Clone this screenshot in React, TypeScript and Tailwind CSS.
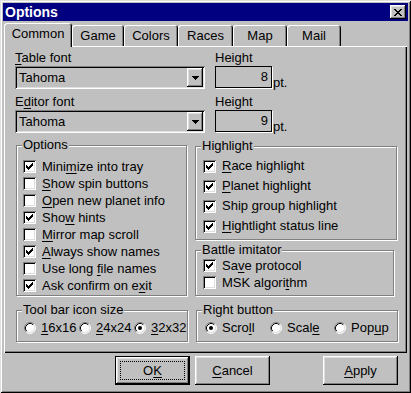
import React from 'react'

const raised =
  'shadow-[inset_-1px_-1px_0_#000,inset_1px_1px_0_#fff,inset_-2px_-2px_0_#808080,inset_2px_2px_0_#dfdfdf]'
const sunken =
  'shadow-[inset_1px_1px_0_#808080,inset_-1px_-1px_0_#fff,inset_2px_2px_0_#000,inset_-2px_-2px_0_#dfdfdf]'

// '&' marks the accelerator letter
function Acc({ t }: { t: string }) {
  const i = t.indexOf('&')
  if (i < 0) return <>{t}</>
  return (
    <>
      {t.slice(0, i)}
      <span className="underline underline-offset-[2px]">{t[i + 1]}</span>
      {t.slice(i + 2)}
    </>
  )
}

function CheckBox({ on }: { on: boolean }) {
  return (
    <span className={`w-[13px] h-[13px] shrink-0 bg-white flex items-center justify-center ${sunken}`}>
      {on && (
        <svg width="7" height="7" viewBox="0 0 7 7" shapeRendering="crispEdges">
          <path
            d="M6 0h1v3h-1z M5 1h1v3h-1z M4 2h1v3h-1z M3 3h1v3h-1z M2 4h1v3h-1z M1 3h1v3h-1z M0 2h1v3h-1z"
            fill="#000"
          />
        </svg>
      )}
    </span>
  )
}

function Check({ label, on, h = 'h-[17px]' }: { label: string; on: boolean; h?: string }) {
  return (
    <div className={`flex items-center ${h}`}>
      <CheckBox on={on} />
      <span className="ml-[6px] whitespace-nowrap">
        <Acc t={label} />
      </span>
    </div>
  )
}

function Radio({ label, on, className = '' }: { label: string; on: boolean; className?: string }) {
  return (
    <div className={`flex items-center ${className}`}>
      <svg width="12" height="12" viewBox="0 0 12 12" className="shrink-0">
        <circle cx="6" cy="6" r="5" fill="#fff" />
        <path d="M2.11 9.89 A5.5 5.5 0 0 1 9.89 2.11" fill="none" stroke="#808080" />
        <path d="M9.89 2.11 A5.5 5.5 0 0 1 2.11 9.89" fill="none" stroke="#fff" />
        <path d="M2.82 9.18 A4.5 4.5 0 0 1 9.18 2.82" fill="none" stroke="#000" />
        <path d="M9.18 2.82 A4.5 4.5 0 0 1 2.82 9.18" fill="none" stroke="#dfdfdf" />
        {on && <circle cx="6" cy="6" r="2" fill="#000" />}
      </svg>
      <span className="ml-[5px] whitespace-nowrap">
        <Acc t={label} />
      </span>
    </div>
  )
}

function Group({
  title,
  className,
  children,
}: {
  title: string
  className: string
  children: React.ReactNode
}) {
  return (
    <div className={`relative border border-[#808080] shadow-[1px_1px_0_#fff,inset_1px_1px_0_#fff] ${className}`}>
      <span className="absolute left-[5px] -top-[9px] bg-[#c0c0c0] px-[1px] leading-[16px] whitespace-nowrap">
        {title}
      </span>
      {children}
    </div>
  )
}

function Combo({ value }: { value: string }) {
  return (
    <div className={`h-[23px] w-[190px] bg-[#c0c0c0] flex items-center justify-between pl-[4px] pr-[2px] ${sunken}`}>
      <span>{value}</span>
      <div className={`w-[16px] h-[19px] flex items-center justify-center ${raised}`}>
        <svg width="7" height="4" viewBox="0 0 7 4" shapeRendering="crispEdges">
          <path d="M0 0h7v1h-7z M1 1h5v1h-5z M2 2h3v1h-3z M3 3h1v1h-1z" fill="#000" />
        </svg>
      </div>
    </div>
  )
}

function HeightBox({ value }: { value: string }) {
  return (
    <div className="flex items-end">
      <div className="w-[57px] h-[22px] border border-black shadow-[1px_1px_0_#fff] bg-[#c0c0c0] flex items-center justify-end pr-[3px]">
        {value}
      </div>
      <span className="ml-[1px] -mb-[3px]">pt.</span>
    </div>
  )
}

function Tab({ label, w, active }: { label: string; w: string; active?: boolean }) {
  if (active)
    return (
      <div
        className={`${w} h-[24px] -mb-[1px] relative z-10 bg-[#c0c0c0] rounded-t-[3px] flex items-center justify-center pb-[3px] shadow-[inset_1px_1px_0_#fff,inset_-1px_0_0_#000,inset_-2px_0_0_#808080]`}
      >
        {label}
      </div>
    )
  return (
    <div
      className={`${w} h-[21px] bg-[#c0c0c0] rounded-t-[3px] flex items-center justify-center pt-[1px] shadow-[inset_1px_1px_0_#fff,inset_-1px_0_0_#000,inset_-2px_0_0_#808080]`}
    >
      {label}
    </div>
  )
}

function Button({ label, def }: { label: string; def?: boolean }) {
  if (def)
    return (
      <div className="relative w-[75px] h-[29px] border border-black flex items-center justify-center">
        <div className={`absolute inset-0 ${raised}`} />
        <span className="absolute left-[4px] right-[4px] top-[4px] bottom-[4px] border border-dotted border-black" />
        <span className="relative">
          <Acc t={label} />
        </span>
      </div>
    )
  return (
    <div className={`w-[75px] h-[29px] flex items-center justify-center ${raised}`}>
      <Acc t={label} />
    </div>
  )
}

export default function App() {
  return (
    <div className="w-[411px] h-[393px] bg-[#c0c0c0] p-[3px] text-black text-[13px] leading-[16px] font-['Liberation_Sans',Arial,sans-serif] shadow-[inset_1px_1px_0_#dfdfdf,inset_-1px_-1px_0_#000,inset_2px_2px_0_#fff,inset_-2px_-2px_0_#808080]">
      {/* title bar */}
      <div className="h-[18px] bg-[#000080] flex items-center justify-between pl-[2px] pr-[2px]">
        <span className="text-white font-bold text-[14px]">Options</span>
        <div className={`w-[16px] h-[14px] bg-[#c0c0c0] flex items-center justify-center ${raised}`}>
          <svg width="8" height="7" viewBox="0 0 8 7" shapeRendering="crispEdges">
            <path
              d="M0 0h2v1h-2z M6 0h2v1h-2z M1 1h2v1h-2z M5 1h2v1h-2z M2 2h4v1h-4z M3 3h2v1h-2z M2 4h4v1h-4z M1 5h2v1h-2z M5 5h2v1h-2z M0 6h2v1h-2z M6 6h2v1h-2z"
              fill="#000"
            />
          </svg>
        </div>
      </div>

      {/* tabs */}
      <div className="mt-[2px] ml-[1px] h-[23px] flex items-end">
        <Tab label="Common" w="w-[68px]" active />
        <Tab label="Game" w="w-[52px]" />
        <Tab label="Colors" w="w-[54px]" />
        <Tab label="Races" w="w-[55px]" />
        <Tab label="Map" w="w-[54px]" />
        <Tab label="Mail" w="w-[54px]" />
      </div>

      {/* page */}
      <div className="ml-[1px] w-[403px] h-[307px] pt-[4px] pl-[11px] shadow-[inset_1px_1px_0_#fff,inset_-1px_-1px_0_#000,inset_-2px_-2px_0_#808080]">
        <div className="flex gap-[10px]">
          <div className="flex flex-col w-[190px]">
            <span className="h-[16px]">
              <Acc t="&Table font" />
            </span>
            <Combo value="Tahoma" />
            <span className="h-[16px] mt-[5px]">
              E<Acc t="&ditor font" />
            </span>
            <Combo value="Tahoma" />
          </div>
          <div className="flex flex-col">
            <span className="h-[16px]">Height</span>
            <HeightBox value="8" />
            <span className="h-[16px] mt-[6px]">Height</span>
            <HeightBox value="9" />
          </div>
        </div>

        <div className="flex mt-[12px] ml-[1px] gap-[8px]">
          <Group title="Options" className="w-[171px] h-[151px] pt-[12px] pl-[6px]">
            <Check label="Mini&mize into tray" on />
            <Check label="&Show spin buttons" on={false} />
            <Check label="&Open new planet info" on={false} />
            <Check label="Sho&w hints" on />
            <Check label="&Mirror map scroll" on={false} />
            <Check label="&Always show names" on />
            <Check label="Use long &file names" on={false} />
            <Check label="Ask confirm on e&xit" on />
          </Group>
          <div className="flex flex-col">
            <Group title="Highlight" className="mt-[1px] w-[202px] h-[94px] pt-[9px] pl-[7px]">
              <Check label="&Race highlight" on h="h-[20px]" />
              <Check label="&Planet highlight" on h="h-[20px]" />
              <Check label="Ship &group highlight" on h="h-[20px]" />
              <Check label="&Hightlight status line" on h="h-[20px]" />
            </Group>
            <Group title="Battle imitator" className="mt-[10px] w-[199px] h-[46px] pt-[6px] pl-[7px]">
              <Check label="Sa&ve protocol" on />
              <Check label="MSK algori&thm" on={false} />
            </Group>
          </div>
        </div>

        <div className="flex mt-[14px] ml-[1px] gap-[8px]">
          <Group title="Tool bar icon size" className="w-[172px] h-[32px] pt-[4px] pl-[7px] flex items-center">
            <Radio label="&16x16" on={false} className="w-[55px]" />
            <Radio label="&24x24" on={false} className="w-[55px]" />
            <Radio label="&32x32" on />
          </Group>
          <Group title="Right button" className="w-[202px] h-[32px] pt-[4px] pl-[8px] flex items-center">
            <Radio label="Scro&ll" on className="w-[65px]" />
            <Radio label="Scal&e" on={false} className="w-[64px]" />
            <Radio label="Pop&up" on={false} />
          </Group>
        </div>
      </div>

      {/* buttons */}
      <div className="mt-[3px] flex justify-end pr-[10px]">
        <Button label="O&K" def />
        <div className="ml-[5px]">
          <Button label="&Cancel" />
        </div>
        <div className="ml-[53px]">
          <Button label="&Apply" />
        </div>
      </div>
    </div>
  )
}
